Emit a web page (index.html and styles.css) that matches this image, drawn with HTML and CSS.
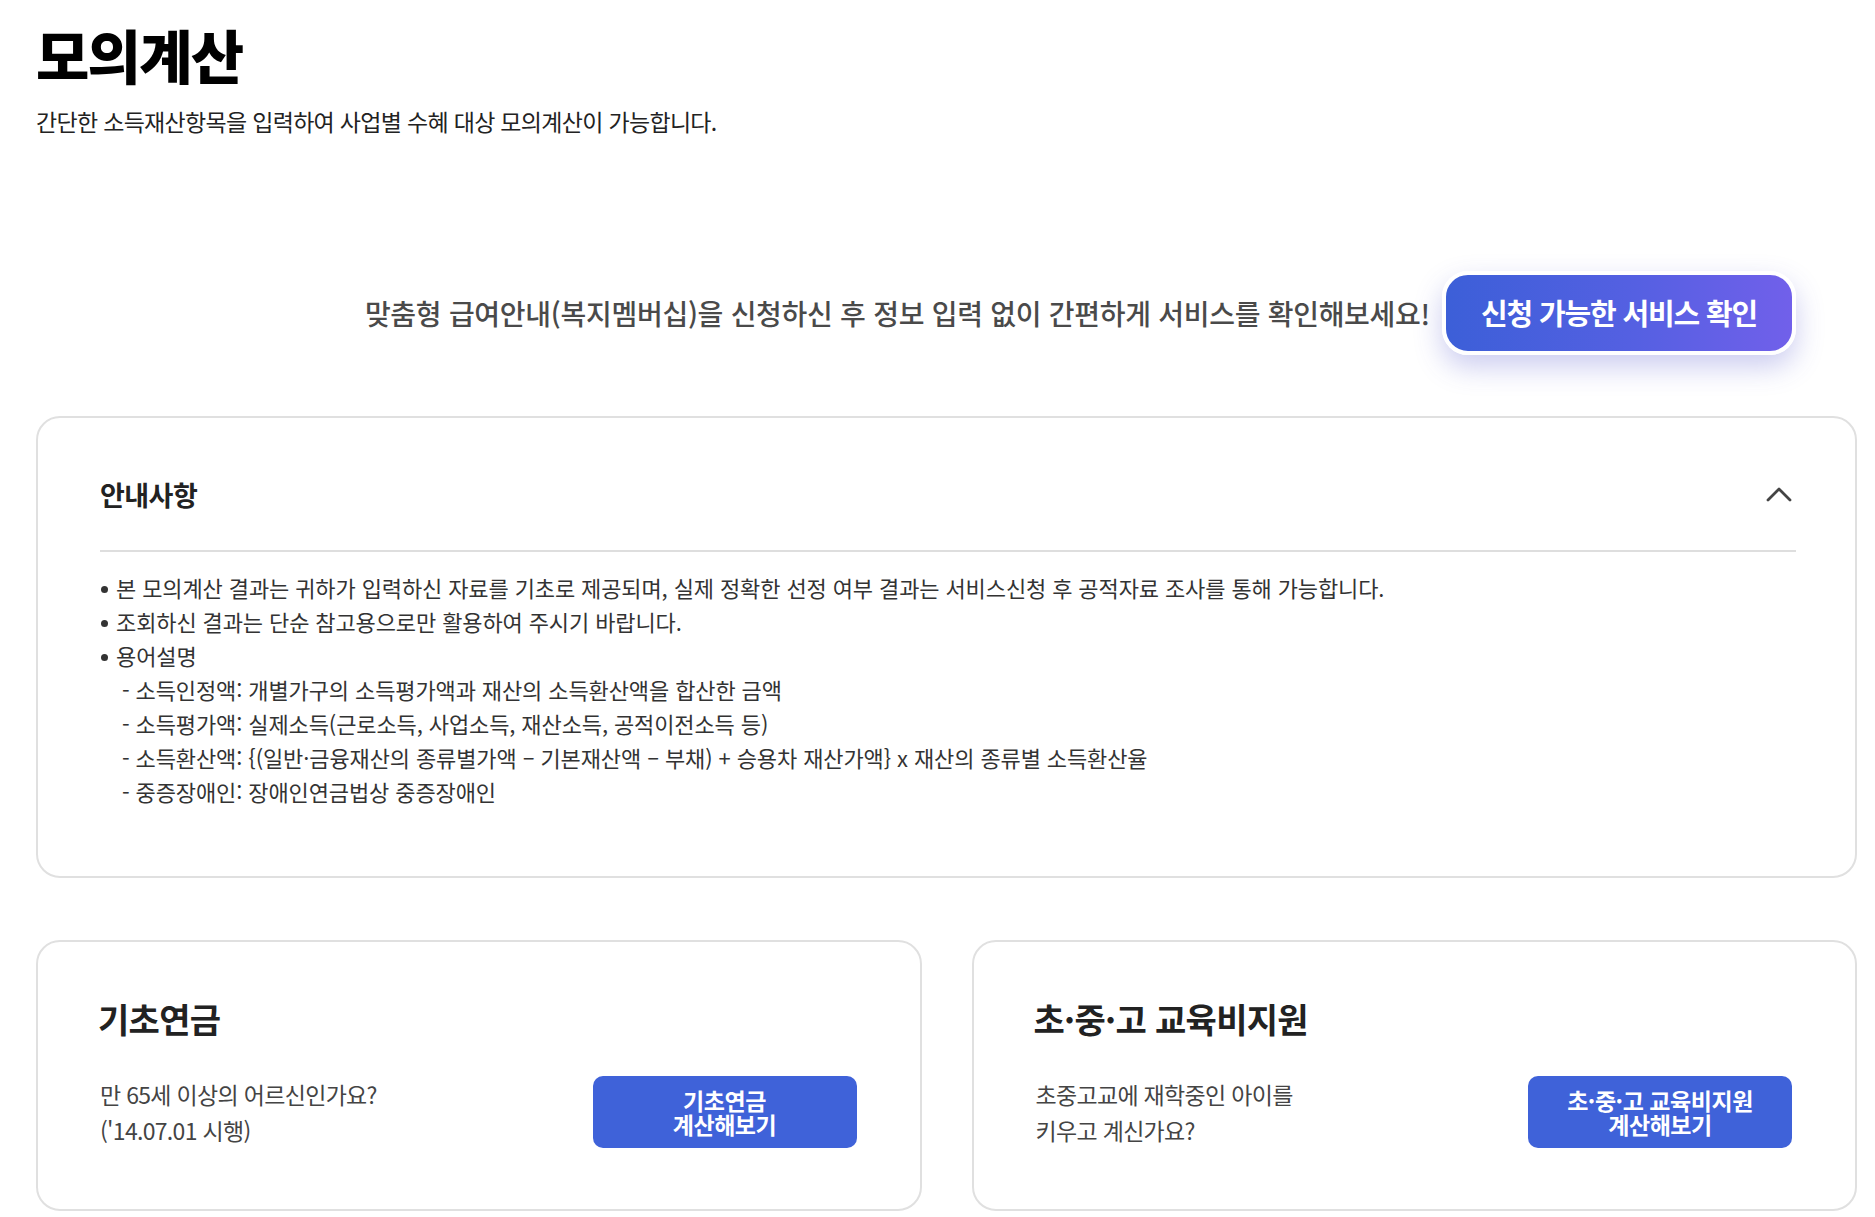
FILE: index.html
```html
<!DOCTYPE html>
<html lang="ko">
<head>
<meta charset="utf-8">
<title>모의계산</title>
<link rel="stylesheet" href="styles.css">
</head>
<body>
<main class="page">
  <h1 class="title">모의계산</h1>
  <p class="subtitle">간단한 소득재산항목을 입력하여 사업별 수혜 대상 모의계산이 가능합니다.</p>

  <div class="banner">
    <p class="banner-text">맞춤형 급여안내(복지멤버십)을 신청하신 후 정보 입력 없이 간편하게 서비스를 확인해보세요!</p>
    <a class="btn-apply" href="#">신청 가능한 서비스 확인</a>
  </div>

  <section class="notice">
    <div class="notice-head">
      <h2 class="notice-title">안내사항</h2>
      <svg class="chevron" width="26" height="16" viewBox="0 0 26 16" aria-hidden="true">
        <path d="M2 14 L13 3 L24 14" fill="none" stroke="#444" stroke-width="2.8" stroke-linecap="round" stroke-linejoin="round"/>
      </svg>
    </div>
    <ul class="notice-list">
      <li>본 모의계산 결과는 귀하가 입력하신 자료를 기초로 제공되며, 실제 정확한 선정 여부 결과는 서비스신청 후 공적자료 조사를 통해 가능합니다.</li>
      <li>조회하신 결과는 단순 참고용으로만 활용하여 주시기 바랍니다.</li>
      <li>용어설명
        <ul class="sub-list">
          <li>- 소득인정액: 개별가구의 소득평가액과 재산의 소득환산액을 합산한 금액</li>
          <li>- 소득평가액: 실제소득(근로소득, 사업소득, 재산소득, 공적이전소득 등)</li>
          <li>- 소득환산액: {(일반·금융재산의 종류별가액 – 기본재산액 – 부채) + 승용차 재산가액} x 재산의 종류별 소득환산율</li>
          <li>- 중증장애인: 장애인연금법상 중증장애인</li>
        </ul>
      </li>
    </ul>
  </section>

  <div class="cards">
    <article class="card">
      <h3 class="card-title">기초연금</h3>
      <div class="card-row">
        <p class="card-desc">만 65세 이상의 어르신인가요?<br>('14.07.01 시행)</p>
        <a class="btn-calc" href="#">기초연금<br>계산해보기</a>
      </div>
    </article>
    <article class="card">
      <h3 class="card-title">초·중·고 교육비지원</h3>
      <div class="card-row">
        <p class="card-desc">초중고교에 재학중인 아이를<br>키우고 계신가요?</p>
        <a class="btn-calc" href="#">초·중·고 교육비지원<br>계산해보기</a>
      </div>
    </article>
  </div>
</main>
</body>
</html>
```

FILE: styles.css
```css
* {
  box-sizing: border-box;
}

html, body {
  margin: 0;
  padding: 0;
  background: #fff;
}

body {
  font-family: "Noto Sans CJK KR", "Noto Sans", sans-serif;
  color: #222;
}

.page {
  padding: 21px 18px 0 36px;
}

.title {
  margin: 0;
  font-size: 58px;
  line-height: 67px;
  font-weight: 800;
  letter-spacing: -0.03em;
  color: #000;
}

.subtitle {
  margin: 17px 0 0;
  font-size: 23px;
  line-height: 33px;
  letter-spacing: -0.03em;
  color: #222;
}

.banner {
  margin-top: 133px;
  display: flex;
  justify-content: flex-end;
  align-items: center;
  gap: 12px;
  padding-right: 61px;
}

.banner-text {
  margin: 0;
  font-size: 28px;
  font-weight: 500;
  letter-spacing: -0.01em;
  color: #4a4a4a;
}

.btn-apply {
  display: flex;
  align-items: center;
  height: 84px;
  padding: 0 35px 2px;
  border: 4px solid #fff;
  border-radius: 26px;
  background: linear-gradient(90deg, #3c5fd8 0%, #5560e2 55%, #7160ea 100%);
  box-shadow: 0 12px 28px rgba(72, 76, 200, 0.28);
  color: #fff;
  font-size: 29px;
  font-weight: 700;
  letter-spacing: -0.04em;
  text-decoration: none;
}

.notice {
  margin-top: 61px;
  border: 2px solid #e0e0e0;
  border-radius: 24px;
  padding: 0 59px 68px 62px;
}

.notice-head {
  display: flex;
  justify-content: space-between;
  align-items: center;
  padding: 59px 4px 37px 0;
  border-bottom: 2px solid #dedede;
}

.notice-title {
  margin: 0;
  font-size: 27px;
  line-height: 36px;
  font-weight: 700;
  letter-spacing: -0.02em;
  color: #222;
}

.chevron {
  display: block;
  margin-top: -3px;
}

.notice-list,
.sub-list {
  list-style: none;
  margin: 0;
  padding: 0;
}

.notice-list {
  padding-top: 18px;
  font-size: 22px;
  line-height: 34px;
  letter-spacing: -0.005em;
  color: #333;
}

.notice-list > li::before {
  content: "";
  display: inline-block;
  width: 7px;
  height: 7px;
  border-radius: 50%;
  background: #333;
  vertical-align: middle;
  margin: 0 8px 4px 1px;
}

.sub-list {
  padding-left: 22px;
}

.cards {
  margin-top: 62px;
  display: grid;
  grid-template-columns: 1fr 1fr;
  gap: 50px;
}

.card {
  border: 2px solid #e0e0e0;
  border-radius: 24px;
  padding: 55px 63px 61px 60px;
}

.card-title {
  margin: 0;
  font-size: 34px;
  line-height: 43px;
  font-weight: 700;
  letter-spacing: -0.02em;
  color: #222;
}

.card-row {
  margin-top: 36px;
  display: flex;
  justify-content: space-between;
  align-items: center;
}

.card-desc {
  margin: 0;
  padding-left: 2px;
  font-size: 23px;
  line-height: 36px;
  letter-spacing: -0.03em;
  color: #444;
}

.btn-calc {
  display: flex;
  align-items: center;
  justify-content: center;
  width: 264px;
  height: 72px;
  border-radius: 10px;
  background: #3f62d9;
  color: #fff;
  font-size: 23px;
  line-height: 24px;
  font-weight: 700;
  letter-spacing: -0.02em;
  text-align: center;
  text-decoration: none;
}
```
